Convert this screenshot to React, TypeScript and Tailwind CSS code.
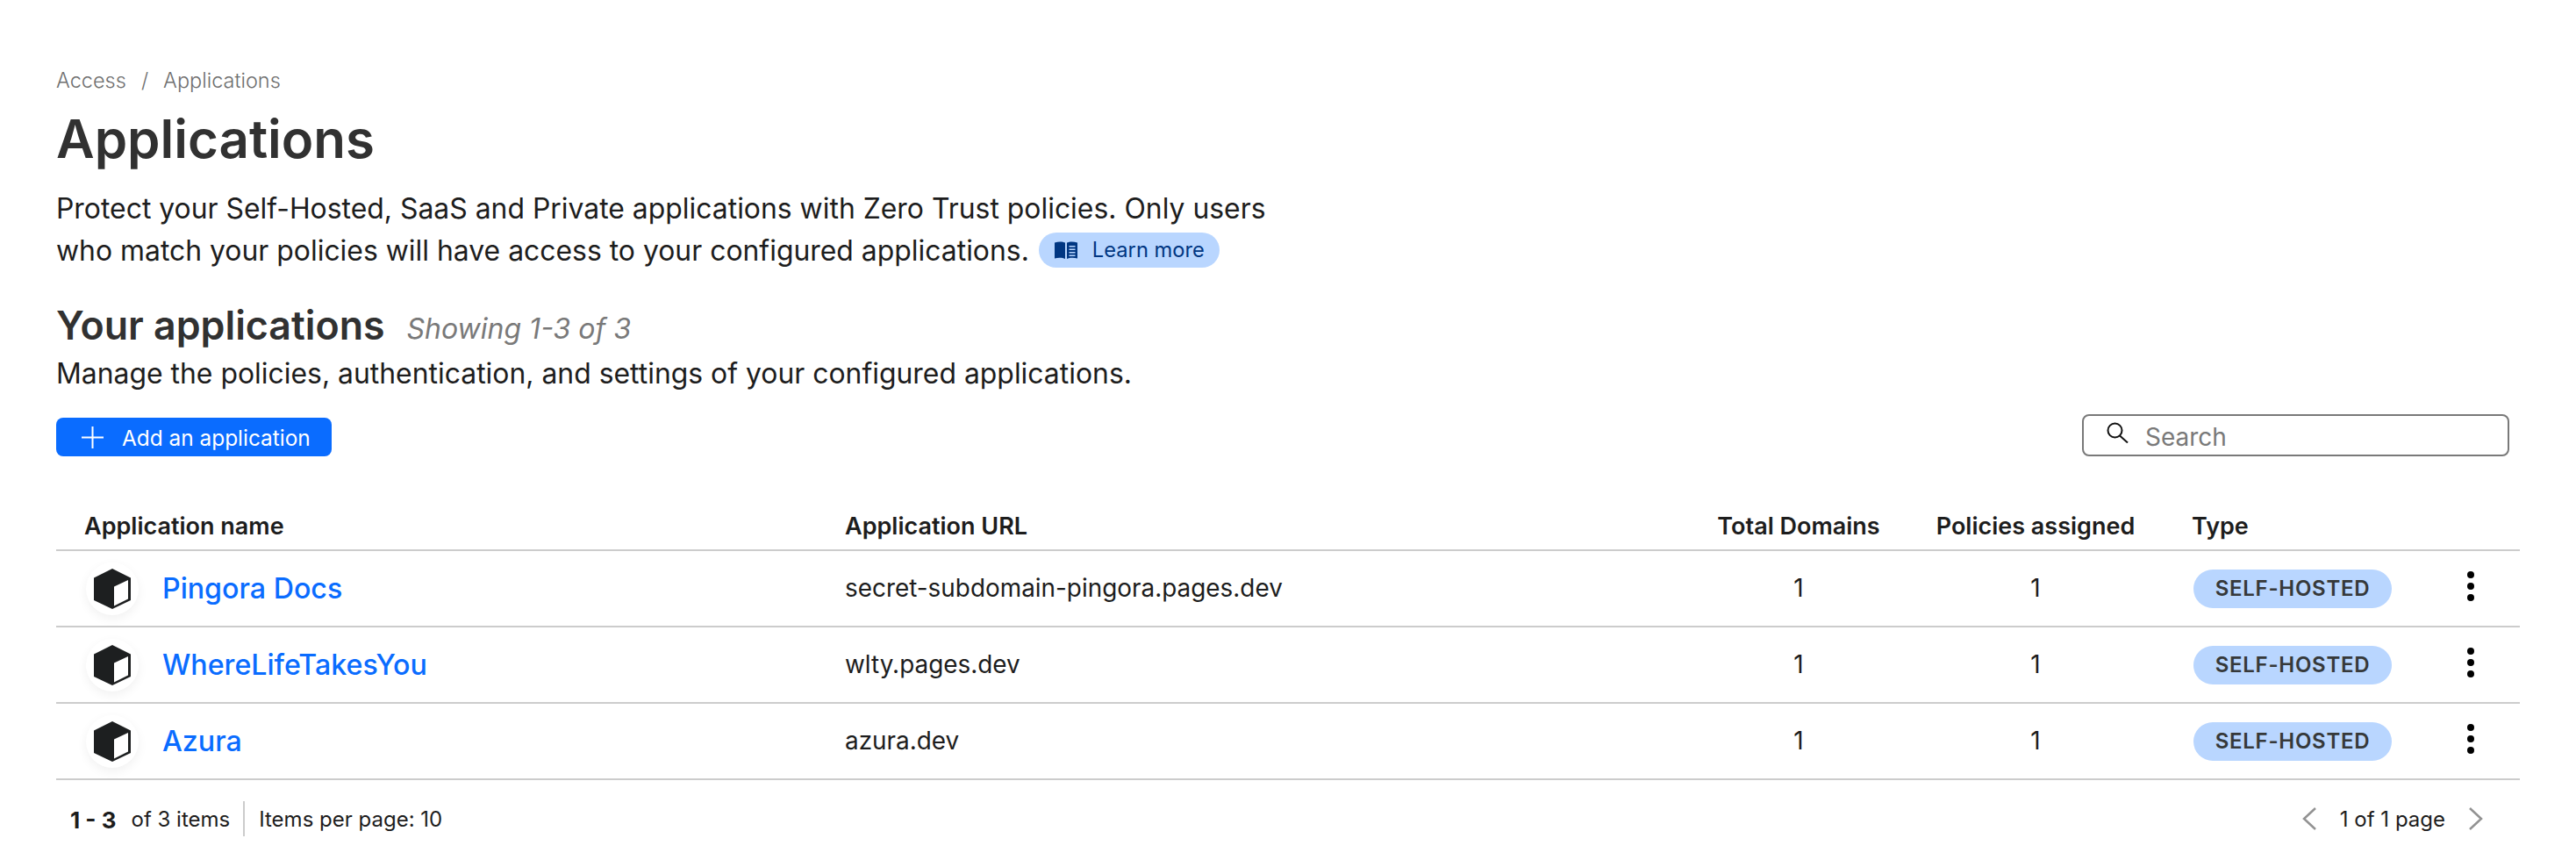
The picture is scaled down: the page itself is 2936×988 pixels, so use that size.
import React from 'react';

const apps = [
  { name: 'Pingora Docs', url: 'secret-subdomain-pingora.pages.dev' },
  { name: 'WhereLifeTakesYou', url: 'wlty.pages.dev' },
  { name: 'Azura', url: 'azura.dev' },
];

const rowGrid = 'grid grid-cols-[867px_977px_220px_320px_1fr] items-center';

function CubeIcon() {
  return (
    <svg width="42" height="46" viewBox="0 0 42 46">
      <path fillRule="evenodd" fill="#1d1f20" d="M21 0L42 10.5V36L21 46L0 36V10.5ZM23 20.5V42.5L39 34.5V13Z" />
    </svg>
  );
}

function BookIcon() {
  return (
    <svg width="26" height="20" viewBox="0 0 26 20" fill="#003682">
      <path d="M0 1.5C4 0 9 0 12 1.5V20C9 18.5 4 18.5 0 19.5Z" />
      <path fillRule="evenodd" d="M14 1.5C17 0 22 0 26 1.5V19.5C22 18.5 17 18.5 14 20ZM16.5 5V6.5H23.5V5ZM16.5 8.5V10H23.5V8.5ZM16.5 12V13.5H23.5V12ZM16.5 15.5V17H23.5V15.5Z" />
    </svg>
  );
}

function Kebab() {
  return (
    <svg width="10" height="36" viewBox="0 0 10 36" fill="#000">
      <circle cx="5" cy="5" r="4" />
      <circle cx="5" cy="18" r="4" />
      <circle cx="5" cy="31" r="4" />
    </svg>
  );
}

function Chevron({ left }: { left?: boolean }) {
  return (
    <svg width="16" height="26" viewBox="0 0 16 26" fill="none" stroke="#929292" strokeWidth="2.5">
      <path d={left ? 'M15 1L2 13L15 25' : 'M1 1L14 13L1 25'} />
    </svg>
  );
}

export default function App() {
  return (
    <div className="min-h-[988px] bg-white pl-[64px] pr-[64px] pt-[76px] font-['Inter',sans-serif] text-[#1d1d1d]">
      {/* Breadcrumb */}
      <div className="flex h-[32px] items-center gap-[17px] text-[23.5px] font-light text-[#6f6f6f]">
        <span>Access</span>
        <span>/</span>
        <span>Applications</span>
      </div>

      <h1 className="mt-[14px] text-[60px] font-semibold leading-[72px] text-[#313131]">Applications</h1>

      <p className="mt-[20px] w-[1420px] text-[31.9px] leading-[48px]">
        Protect your Self-Hosted, SaaS and Private applications with Zero Trust policies. Only users
        <br />
        who match your policies will have access to your configured applications.
        <span className="ml-[11px] inline-flex h-[40px] items-center gap-[17px] rounded-full bg-[#b9d6ff] pl-[18px] pr-[17px] align-[2px] text-[23.7px] leading-none text-[#003682]">
          <BookIcon />
          Learn more
        </span>
      </p>

      <div className="mt-[34px] flex h-[56px] items-center gap-[25px]">
        <h2 className="text-[44.7px] font-semibold text-[#313131]">Your applications</h2>
        <span className="mt-[6px] text-[32px] italic text-[#797979]">Showing 1-3 of 3</span>
      </div>
      <p className="mt-[2px] text-[31.9px] leading-[48px]">Manage the policies, authentication, and settings of your configured applications.</p>

      {/* Toolbar */}
      <div className="mt-[22px] flex items-end justify-between pr-[12px]">
        <button className="flex h-[44px] w-[314px] items-center gap-[21px] rounded-[8px] bg-[#0a6cff] pl-[29px] text-[24.4px] text-white">
          <svg width="25" height="25" viewBox="0 0 25 25" stroke="#fff" strokeWidth="2">
            <path d="M12.5 0V25M0 12.5H25" />
          </svg>
          <span className="mt-[2px]">Add an application</span>
        </button>
        <div className="flex h-[48px] w-[487px] items-center gap-[19px] rounded-[8px] border-2 border-[#797979] pl-[26px] text-[28px] text-[#797979]">
          <svg className="-mt-[6px]" width="25" height="24" viewBox="0 0 25 24" fill="none" stroke="#111" strokeWidth="2">
            <circle cx="9.5" cy="9.5" r="8" />
            <path d="M15 15.5L24 23.5" />
          </svg>
          <span className="mt-[3px]">Search</span>
        </div>
      </div>

      {/* Table */}
      <div className="mt-[52px] text-[27.9px]">
        <div className={`${rowGrid} h-[56px] border-b-2 border-[#cccccc] pl-[32px] pt-[2px] text-[27px] font-semibold text-[#1d1d1d]`}>
          <span>Application name</span>
          <span>Application URL</span>
          <span className="text-center">Total Domains</span>
          <span className="text-center">Policies assigned</span>
          <span className="pl-[18px]">Type</span>
        </div>
        {apps.map((app) => (
          <div key={app.name} className={`${rowGrid} h-[87px] border-b-2 border-[#cccccc] pl-[32px]`}>
            <div className="flex items-center gap-[27px] pl-[2px]">
              <div className="flex h-[60px] w-[60px] items-center justify-center rounded-full bg-white shadow-[0_4px_12px_rgba(0,0,0,0.06)]">
                <CubeIcon />
              </div>
              <span className="mt-[2px] text-[32.2px] font-medium text-[#0a6cff]">{app.name}</span>
            </div>
            <span>{app.url}</span>
            <span className="text-center">1</span>
            <span className="text-center">1</span>
            <div className="flex items-center pl-[20px]">
              <span className="flex h-[44px] w-[226px] items-center justify-center rounded-full bg-[#b9d6ff] text-[24px] font-semibold tracking-[0.03em] text-[#36393a]">
                SELF-HOSTED
              </span>
              <span className="ml-[85px] -mt-[5px] flex">
                <Kebab />
              </span>
            </div>
          </div>
        ))}
      </div>

      {/* Footer */}
      <div className="mt-[24px] flex h-[40px] items-center justify-between pl-[16px] pr-[42px] text-[24px]">
        <div className="flex h-full items-center">
          <span className="mt-[2px] text-[26px] font-bold">1 - 3</span>
          <span className="ml-[17px] mt-[2px]">of 3 items</span>
          <span className="ml-[15px] mr-[16px] h-full w-[2px] bg-[#cccccc]" />
          <span className="mt-[2px]">Items per page: 10</span>
        </div>
        <div className="flex items-center gap-[27px]">
          <Chevron left />
          <span className="mt-[2px]">1 of 1 page</span>
          <Chevron />
        </div>
      </div>
    </div>
  );
}
